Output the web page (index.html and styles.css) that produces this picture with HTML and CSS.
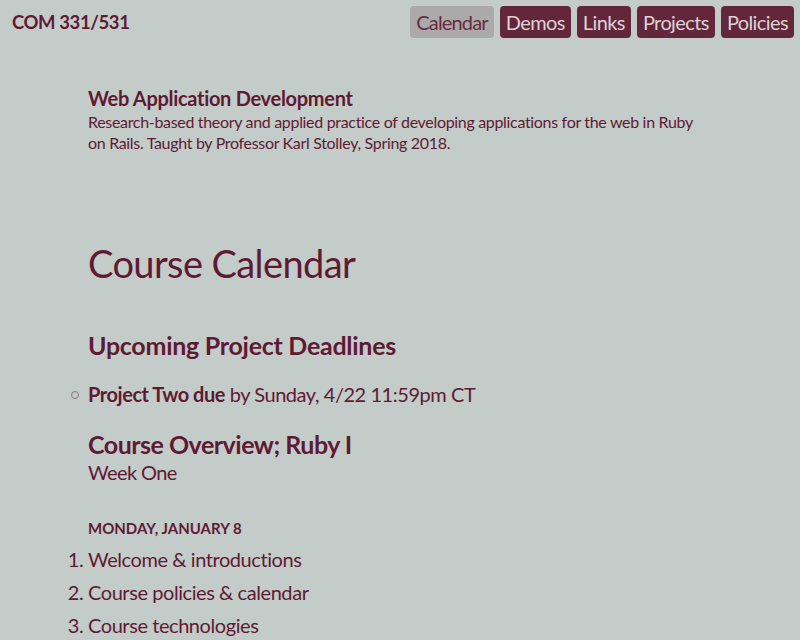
FILE: index.html
```html
<!DOCTYPE html>
<html lang="en">
<head>
<meta charset="utf-8">
<title>Course Calendar</title>
<link rel="stylesheet" href="styles.css">
</head>
<body>
<header class="site-header">
  <div class="site-title">COM 331/531</div>
  <nav class="nav">
    <a class="nav-item active" href="#">Calendar</a>
    <a class="nav-item" href="#">Demos</a>
    <a class="nav-item" href="#">Links</a>
    <a class="nav-item" href="#">Projects</a>
    <a class="nav-item" href="#">Policies</a>
  </nav>
</header>
<main class="main">
  <section class="intro">
    <h2 class="intro-title">Web Application Development</h2>
    <p class="intro-text">Research-based theory and applied practice of developing applications for the web in Ruby on Rails. Taught by Professor Karl Stolley, Spring 2018.</p>
  </section>
  <h1 class="page-title">Course Calendar</h1>
  <h2 class="section-title">Upcoming Project Deadlines</h2>
  <ul class="deadlines">
    <li class="deadline"><strong>Project Two due</strong> by Sunday, 4/22 11:59pm CT</li>
  </ul>
  <h2 class="week-title">Course Overview; Ruby I</h2>
  <p class="week-sub">Week One</p>
  <h3 class="day">Monday, January 8</h3>
  <ol class="agenda">
    <li>Welcome &amp; introductions</li>
    <li>Course policies &amp; calendar</li>
    <li>Course technologies</li>
  </ol>
</main>
</body>
</html>
```
FILE: styles.css
```css
html, body {
  margin: 0;
  padding: 0;
}
body {
  background: #c3ccc9;
  color: #5f1a33;
  font-family: Lato, "Open Sans", sans-serif;
}
.site-header {
  display: flex;
  justify-content: space-between;
  align-items: center;
  padding: 6px 6px 0 12px;
}
.site-title {
  font-weight: 700;
  font-size: 18.5px;
  letter-spacing: -0.4px;
}
.nav {
  display: flex;
  gap: 6px;
}
.nav-item {
  display: block;
  height: 32px;
  line-height: 32px;
  padding: 0 6px;
  border-radius: 4px;
  background: #64263b;
  color: #dcd3d6;
  text-decoration: none;
  font-size: 20px;
  letter-spacing: -0.6px;
}
.nav-item.active {
  background: #aba9aa;
  color: #6a2a41;
  letter-spacing: -0.85px;
}
.main {
  padding: 0 100px 0 88px;
}
.intro {
  margin-top: 47px;
}
.intro-title {
  margin: 0;
  font-size: 20px;
  font-weight: 700;
  line-height: 26px;
  letter-spacing: -0.3px;
}
.intro-text {
  margin: 0;
  font-size: 16px;
  line-height: 21px;
  letter-spacing: -0.32px;
}
.page-title {
  margin: 85px 0 0;
  font-size: 38px;
  font-weight: 400;
  line-height: 50px;
  letter-spacing: -0.6px;
}
.section-title {
  margin: 41px 0 0;
  font-size: 25px;
  font-weight: 700;
  line-height: 32px;
  letter-spacing: -0.27px;
}
.deadlines {
  margin: 18px 0 0;
  padding: 0;
  list-style: none;
  font-size: 20px;
  line-height: 30px;
  letter-spacing: -0.45px;
}
.deadline {
  position: relative;
}
.deadline::before {
  content: "";
  position: absolute;
  left: -17px;
  top: 12px;
  width: 6px;
  height: 6px;
  border: 1px solid #857a7e;
  border-radius: 50%;
}
.week-title {
  margin: 20px 0 0;
  font-size: 25px;
  font-weight: 700;
  line-height: 30px;
  letter-spacing: -0.5px;
}
.week-sub {
  margin: 0;
  font-size: 20px;
  line-height: 26px;
  letter-spacing: -0.6px;
}
.day {
  margin: 32px 0 0;
  font-size: 15px;
  font-weight: 700;
  text-transform: uppercase;
  line-height: 22px;
}
.agenda {
  margin: 4px 0 0;
  padding: 0;
  font-size: 20px;
  line-height: 33px;
  letter-spacing: -0.43px;
}
```
